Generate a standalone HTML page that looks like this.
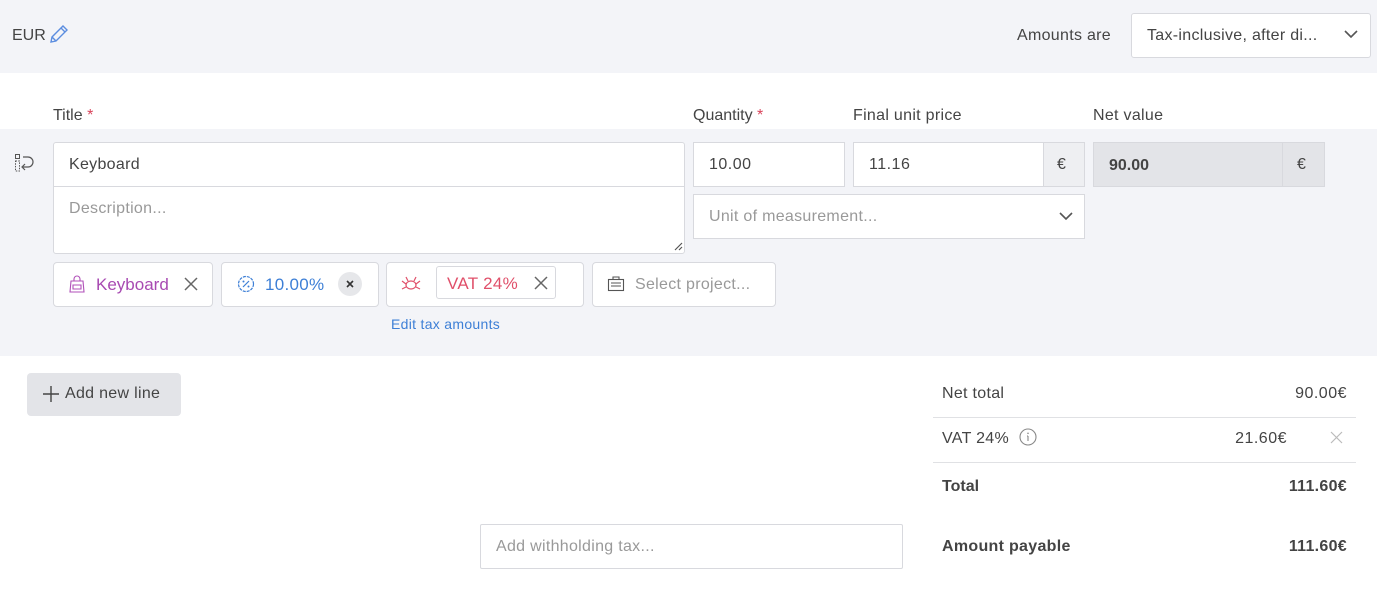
<!DOCTYPE html>
<html><head><meta charset="utf-8"><style>
*{box-sizing:border-box;margin:0;padding:0}
body{width:1377px;height:594px;background:#fff;font-family:"Liberation Sans",sans-serif;color:#444;position:relative;overflow:hidden;font-size:16px}
.a{position:absolute}
.box{position:absolute;background:#fff;border:1px solid #d8d9de}
.t{position:absolute;white-space:nowrap;margin-top:1px}
.r{position:absolute;white-space:nowrap;margin-top:1px;text-align:right}
.star{color:#d9435a}
</style></head><body>
<div class="a" style="left:0;top:0;width:1377px;height:73px;background:#f3f4f8"></div>
<div class="t" style="left:12px;top:26px;font-size:16px;color:#444">EUR</div>
<svg class="a" style="left:49px;top:24px" width="20" height="20" viewBox="0 0 20 20"><path d="M2 18l1-5L14 2l4 4L7 17z M12 4l4 4 M3 13l4 4" fill="none" stroke="#5b8de0" stroke-width="1.4"/></svg>
<div class="t" style="left:1017px;top:26px;color:#444;letter-spacing:0.3px">Amounts are</div>
<div class="box" style="left:1131px;top:13px;width:240px;height:45px;border-radius:3px"></div>
<div class="t" style="left:1147px;top:26px;color:#444;letter-spacing:0.3px">Tax-inclusive, after di...</div>
<svg class="a" style="left:1344px;top:29px" width="14" height="10"><path d="M1 2l6 6 6-6" fill="none" stroke="#555" stroke-width="1.6"/></svg>

<div class="t" style="left:53px;top:106px">Title <span class="star">*</span></div>
<div class="t" style="left:693px;top:106px">Quantity <span class="star">*</span></div>
<div class="t" style="left:853px;top:106px;letter-spacing:0.3px">Final unit price</div>
<div class="t" style="left:1093px;top:106px;letter-spacing:0.3px">Net value</div>

<div class="a" style="left:0;top:129px;width:1377px;height:227px;background:#f3f4f8"></div>
<svg class="a" style="left:14px;top:153px" width="22" height="20" viewBox="0 0 22 20"><rect x="1.5" y="1.5" width="4" height="4" fill="none" stroke="#555" stroke-width="1"/><rect x="1.5" y="8" width="4" height="10" fill="none" stroke="#555" stroke-width="1" stroke-dasharray="1.5 1.2"/><path d="M9 4h5a5 5 0 0 1 0 10h-5 M11 11l-3 3 3 3" fill="none" stroke="#555" stroke-width="1.2"/></svg>
<div class="box" style="left:53px;top:142px;width:632px;height:112px;border-radius:3px"></div>
<div class="a" style="left:54px;top:186px;width:630px;height:1px;background:#d8d9de"></div>
<div class="t" style="left:69px;top:155px;color:#444;letter-spacing:0.3px">Keyboard</div>
<div class="t" style="left:69px;top:199px;color:#999;letter-spacing:0.3px">Description...</div>
<svg class="a" style="left:674px;top:242px" width="9" height="9"><path d="M1 8L8 1M5 8l3-3" stroke="#555" stroke-width="1.2"/></svg>

<div class="box" style="left:693px;top:142px;width:152px;height:45px"></div>
<div class="t" style="left:709px;top:155px;letter-spacing:0.5px">10.00</div>
<div class="box" style="left:853px;top:142px;width:232px;height:45px"></div>
<div class="a" style="left:1043px;top:143px;width:41px;height:43px;background:#eeeff2;border-left:1px solid #d8d9de"></div>
<div class="t" style="left:869px;top:155px;letter-spacing:0.5px">11.16</div>
<div class="t" style="left:1057px;top:155px">€</div>
<div class="box" style="left:1093px;top:142px;width:232px;height:45px;background:#e3e4e8"></div>
<div class="a" style="left:1282px;top:143px;width:1px;height:43px;background:#d8d9de"></div>
<div class="t" style="left:1109px;top:156px;font-weight:bold;color:#444">90.00</div>
<div class="t" style="left:1297px;top:155px">€</div>
<div class="box" style="left:693px;top:194px;width:392px;height:45px"></div>
<div class="t" style="left:709px;top:207px;color:#999;letter-spacing:0.3px">Unit of measurement...</div>
<svg class="a" style="left:1059px;top:211px" width="14" height="10"><path d="M1 2l6 6 6-6" fill="none" stroke="#555" stroke-width="1.6"/></svg>

<div class="box" style="left:53px;top:262px;width:160px;height:45px;border-radius:4px"></div>
<svg class="a" style="left:68px;top:274px" width="18" height="20" viewBox="0 0 18 20"><path d="M3 7h12l1 11H2z M6 7V5a3 3 0 0 1 6 0v2 M5 11h8v4H5z" fill="none" stroke="#b04fb8" stroke-width="1.1"/></svg>
<div class="t" style="left:96px;top:274px;color:#a84ab2;font-size:17px">Keyboard</div>
<svg class="a" style="left:184px;top:277px" width="14" height="14"><path d="M1 1l12 12M13 1L1 13" stroke="#666" stroke-width="1.5"/></svg>

<div class="box" style="left:221px;top:262px;width:158px;height:45px;border-radius:4px"></div>
<svg class="a" style="left:236px;top:274px" width="20" height="20" viewBox="0 0 20 20"><circle cx="10" cy="10" r="7.5" fill="none" stroke="#3d7fd6" stroke-width="1.2" stroke-dasharray="3 1"/><path d="M7 13l6-6" stroke="#3d7fd6" stroke-width="1.2"/><circle cx="7.5" cy="7.5" r="1" fill="#3d7fd6"/><circle cx="12.5" cy="12.5" r="1" fill="#3d7fd6"/></svg>
<div class="t" style="left:265px;top:274px;color:#3d7fd6;font-size:17px;letter-spacing:0.3px">10.00%</div>
<div class="a" style="left:338px;top:272px;width:24px;height:24px;border-radius:12px;background:#e6e7ea"></div>
<svg class="a" style="left:346px;top:280px" width="8" height="8"><path d="M1 1l6 6M7 1L1 7" stroke="#333" stroke-width="1.6"/></svg>

<div class="box" style="left:386px;top:262px;width:198px;height:45px;border-radius:4px"></div>
<svg class="a" style="left:401px;top:275px" width="20" height="18" viewBox="0 0 20 18"><ellipse cx="10" cy="10" rx="5" ry="4" fill="none" stroke="#e0506a" stroke-width="1.2"/><path d="M5 9L1 6M5 12l-4 2M15 9l4-3M15 12l4 2M7 6L5 2M13 6l2-4" stroke="#e0506a" stroke-width="1.2" fill="none"/></svg>
<div class="box" style="left:436px;top:266px;width:120px;height:33px;border-radius:3px"></div>
<div class="t" style="left:447px;top:273px;color:#e0506a;font-size:17px;letter-spacing:0.3px">VAT 24%</div>
<svg class="a" style="left:534px;top:276px" width="14" height="14"><path d="M1 1l12 12M13 1L1 13" stroke="#666" stroke-width="1.5"/></svg>
<div class="t" style="left:391px;top:315px;color:#3d7fd6;font-size:14px;letter-spacing:0.3px">Edit tax amounts</div>

<div class="box" style="left:592px;top:262px;width:184px;height:45px;border-radius:4px"></div>
<svg class="a" style="left:607px;top:275px" width="18" height="18" viewBox="0 0 18 18"><rect x="1.5" y="4.5" width="15" height="11" fill="none" stroke="#555" stroke-width="1.1"/><path d="M6 4.5V2h6v2.5M4 8h10M4 11h10" stroke="#555" stroke-width="1.1" fill="none"/></svg>
<div class="t" style="left:635px;top:275px;color:#999;letter-spacing:0.3px">Select project...</div>

<div class="a" style="left:27px;top:373px;width:154px;height:43px;border-radius:4px;background:#e3e4e8"></div>
<svg class="a" style="left:42px;top:385px" width="18" height="18"><path d="M9 1v16M1 9h16" stroke="#444" stroke-width="1.4"/></svg>
<div class="t" style="left:65px;top:384px;color:#444;font-size:16px;letter-spacing:0.3px">Add new line</div>

<div class="t" style="left:942px;top:384px;letter-spacing:0.3px">Net total</div>
<div class="r" style="right:30px;top:384px;letter-spacing:0.5px">90.00€</div>
<div class="a" style="left:933px;top:417px;width:423px;height:1px;background:#e0e1e4"></div>
<div class="t" style="left:942px;top:429px;letter-spacing:0.3px">VAT 24%</div>
<svg class="a" style="left:1019px;top:428px" width="18" height="18"><circle cx="9" cy="9" r="8" fill="none" stroke="#888" stroke-width="1.1"/><path d="M9 8v5M8 8h1" stroke="#888" stroke-width="1.1"/><circle cx="9" cy="5.3" r=".8" fill="#888"/></svg>
<div class="r" style="right:90px;top:429px;letter-spacing:0.5px">21.60€</div>
<svg class="a" style="left:1330px;top:431px" width="13" height="13"><path d="M1 1l11 11M12 1L1 12" stroke="#bbb" stroke-width="1.2"/></svg>
<div class="a" style="left:933px;top:462px;width:423px;height:1px;background:#e0e1e4"></div>
<div class="t" style="left:942px;top:477px;font-weight:bold;font-size:16px">Total</div>
<div class="r" style="right:30px;top:477px;font-weight:bold;letter-spacing:0.3px">111.60€</div>
<div class="t" style="left:942px;top:537px;font-weight:bold;letter-spacing:0.3px">Amount payable</div>
<div class="r" style="right:30px;top:537px;font-weight:bold;letter-spacing:0.3px">111.60€</div>

<div class="box" style="left:480px;top:524px;width:423px;height:45px;border-radius:2px"></div>
<div class="t" style="left:496px;top:537px;color:#999;letter-spacing:0.3px">Add withholding tax...</div>
</body></html>
